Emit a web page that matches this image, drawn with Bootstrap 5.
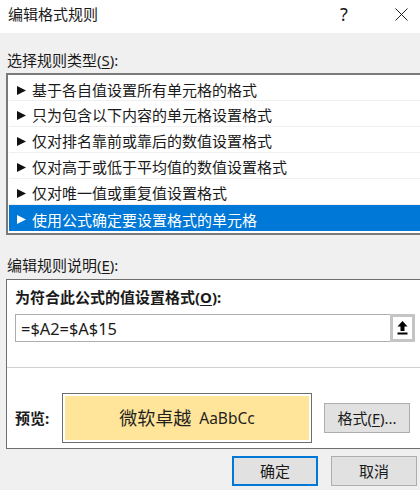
<!DOCTYPE html>
<html lang="zh-CN">
<head>
    <meta charset="UTF-8">
    <meta name="viewport" content="width=device-width, initial-scale=1.0">
    <title>编辑格式规则</title>
    <link href="https://cdn.jsdelivr.net/npm/bootstrap@5.3.0/dist/css/bootstrap.min.css" rel="stylesheet">
    <script src="https://cdn.jsdelivr.net/npm/bootstrap@5.3.0/dist/js/bootstrap.bundle.min.js"></script>
    <style>
        html, body { height: 100%; overflow: hidden; }
        body { background: #f0f0f0; color: #1a1a1a; font: 15px/20px "Noto Sans", "Noto Sans CJK SC", sans-serif; }
        u { text-underline-offset: 2px; }
        .title-bar { height: 33px; padding: 0 0 5px 8px; background: #fff; }
        .help-btn { width: 38px; margin-right: 19px; font-size: 18px; }
        .close-btn { width: 38px; }
        .dlg-label { padding-left: 7px; height: 20px; }
        .rule-label { margin-top: 17px; margin-bottom: 3px; }
        .rule-box { margin: 0 -4px 0 6px; padding: 2px 0 2px 1px; background: #fff; border: 2px solid #7a7a7a; }
        .rule-item { height: 26px; padding: 3px 0 0 8px; gap: 6px; border-bottom: 1px solid #f0f0f0; }
        .rule-item:first-child { height: 24px; }
        .rule-item.chosen { background: #0078d7; color: #fff; border-bottom: 0; }
        .rule-item svg { flex: none; }
        .desc-label { margin-top: 20px; margin-bottom: 4px; }
        .desc-panel { height: 170px; margin: 0 -4px 0 6px; background: #fff; border: 1px solid #6e6e6e; }
        .desc-title { height: 34px; padding: 7px 0 0 8px; font-weight: 700; }
        .formula-row { height: 28px; margin: 0 8px; border: 1px solid #adadad; }
        .formula-text { padding: 1px 0 0 5px; font-size: 16.4px; }
        .pick-btn { width: 25px; border: 3px solid #c4c4c4; background: #fff; margin: -1px -1px -1px 0; }
        .panel-line { height: 1px; margin-top: 25px; background: #cfcfcf; }
        .preview-row { margin-top: 25px; padding: 0 8px; }
        .preview-name { width: 47px; font-weight: 700; }
        .preview-frame { width: 250px; height: 50px; padding: 2px; border: 1px solid #6e6e6e; }
        .preview-fill { background: #ffe599; gap: 8px; color: #1f1f1f; }
        .preview-cn { font-size: 18px; }
        .preview-en { font-size: 15.5px; }
        .win-btn { width: 86px; height: 30px; padding: 0; background: #e1e1e1; border: 1px solid #adadad; border-radius: 0; color: #1a1a1a; font-size: 15px; line-height: 20px; }
        .win-btn.default-btn { border: 2px solid #0078d7; }
        .format-btn { margin-left: 12px; }
        .foot-row { gap: 13px; margin: 7px 3px 0 0; }
    </style>
</head>
<body>

<!-- Title bar -->
<div class="title-bar d-flex align-items-center justify-content-between">
    <span>编辑格式规则</span>
    <div class="d-flex align-items-center">
        <span class="help-btn text-center">?</span>
        <span class="close-btn d-flex justify-content-center">
            <svg width="13" height="13" viewBox="0 0 13 13"><path d="M0.5 0.5L12.5 12.5M12.5 0.5L0.5 12.5" stroke="#222" fill="none"/></svg>
        </span>
    </div>
</div>

<!-- Rule types -->
<div class="dlg-label rule-label">选择规则类型(<u>S</u>):</div>
<div class="rule-box">
    <div class="rule-item d-flex align-items-center"><svg width="9" height="9" viewBox="0 0 9 9"><path d="M0 0L9 4.5L0 9Z" fill="#111"/></svg><span>基于各自值设置所有单元格的格式</span></div>
    <div class="rule-item d-flex align-items-center"><svg width="9" height="9" viewBox="0 0 9 9"><path d="M0 0L9 4.5L0 9Z" fill="#111"/></svg><span>只为包含以下内容的单元格设置格式</span></div>
    <div class="rule-item d-flex align-items-center"><svg width="9" height="9" viewBox="0 0 9 9"><path d="M0 0L9 4.5L0 9Z" fill="#111"/></svg><span>仅对排名靠前或靠后的数值设置格式</span></div>
    <div class="rule-item d-flex align-items-center"><svg width="9" height="9" viewBox="0 0 9 9"><path d="M0 0L9 4.5L0 9Z" fill="#111"/></svg><span>仅对高于或低于平均值的数值设置格式</span></div>
    <div class="rule-item d-flex align-items-center"><svg width="9" height="9" viewBox="0 0 9 9"><path d="M0 0L9 4.5L0 9Z" fill="#111"/></svg><span>仅对唯一值或重复值设置格式</span></div>
    <div class="rule-item chosen d-flex align-items-center"><svg width="9" height="9" viewBox="0 0 9 9"><path d="M0 0L9 4.5L0 9Z" fill="#fff"/></svg><span>使用公式确定要设置格式的单元格</span></div>
</div>

<!-- Rule description -->
<div class="dlg-label desc-label">编辑规则说明(<u>E</u>):</div>
<div class="desc-panel">
    <div class="desc-title">为符合此公式的值设置格式(<u>O</u>):</div>
    <div class="formula-row d-flex">
        <div class="formula-text flex-grow-1 d-flex align-items-center">=$A2=$A$15</div>
        <div class="pick-btn d-flex align-items-center justify-content-center">
            <svg width="11" height="14" viewBox="0 0 11 14"><path d="M5.5 0L10.5 5.5H7.5V10H3.5V5.5H0.5Z" fill="#000"/><rect x="0.5" y="11.5" width="10" height="2" fill="#000"/></svg>
        </div>
    </div>
    <div class="panel-line"></div>
    <div class="preview-row d-flex align-items-center">
        <div class="preview-name">预览:</div>
        <div class="preview-frame">
            <div class="preview-fill h-100 d-flex align-items-center justify-content-center">
                <span class="preview-cn">微软卓越</span><span class="preview-en">AaBbCc</span>
            </div>
        </div>
        <button type="button" class="btn win-btn format-btn">格式(<u>F</u>)...</button>
    </div>
</div>

<div class="foot-row d-flex justify-content-end">
    <button type="button" class="btn win-btn default-btn">确定</button>
    <button type="button" class="btn win-btn">取消</button>
</div>

</body>
</html>
